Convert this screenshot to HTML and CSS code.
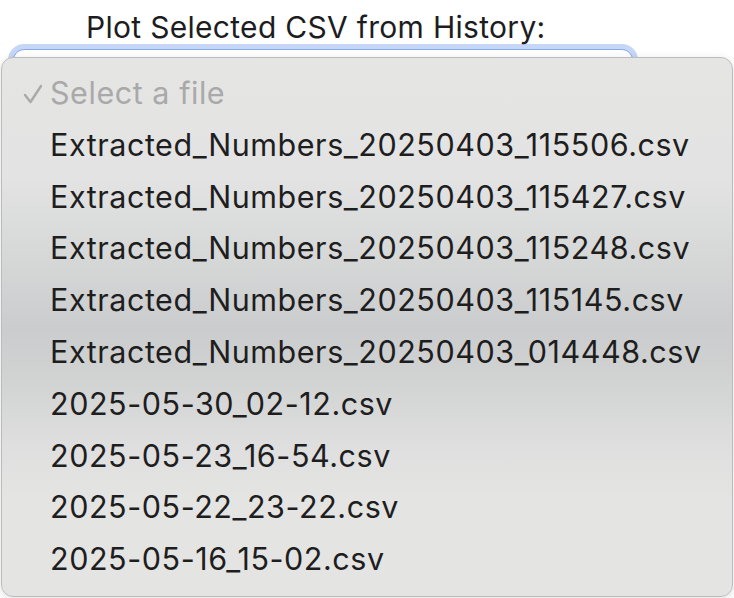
FILE: index.html
```html
<!DOCTYPE html>
<html>
<head>
<meta charset="utf-8">
<link rel="stylesheet" href="styles.css">
</head>
<body>
<div class="page">
  <div class="label">Plot Selected CSV from History:</div>
  <div class="ring"><div class="select"></div></div>
  <div class="menu">
    <div class="item placeholder"><svg class="check" width="20" height="20" viewBox="0 0 20 20"><path d="M2 11 L7.5 18 L18 2" fill="none" stroke="#a9a9a9" stroke-width="2.4" stroke-linecap="round" stroke-linejoin="round"/></svg>Select a file</div>
    <div class="item">Extracted_Numbers_20250403_115506.csv</div>
    <div class="item">Extracted_Numbers_20250403_115427.csv</div>
    <div class="item">Extracted_Numbers_20250403_115248.csv</div>
    <div class="item">Extracted_Numbers_20250403_115145.csv</div>
    <div class="item">Extracted_Numbers_20250403_014448.csv</div>
    <div class="item">2025-05-30_02-12.csv</div>
    <div class="item">2025-05-23_16-54.csv</div>
    <div class="item">2025-05-22_23-22.csv</div>
    <div class="item">2025-05-16_15-02.csv</div>
  </div>
</div>
</body>
</html>
```
FILE: styles.css
```css
html, body {
  margin: 0;
  padding: 0;
  background: #ffffff;
  width: 734px;
  height: 598px;
  overflow: hidden;
}
.page {
  position: relative;
  width: 734px;
  height: 598px;
  font-family: Inter, "Noto Sans", sans-serif;
  color: #1f1f1f;
}
.label {
  padding: 9px 0 0 86px;
  height: 35px;
  font-size: 30px;
  line-height: 36px;
  letter-spacing: 0.3px;
  color: #1d1d1f;
}
.ring {
  margin: 0 0 0 8px;
  width: 630px;
  height: 60px;
  box-sizing: border-box;
  padding: 5px;
  border-radius: 16px;
  background: #c5d6f6;
}
.select {
  height: 100%;
  box-sizing: border-box;
  border: 1.5px solid #86a9ee;
  border-radius: 11px;
  background: #ffffff;
}
.menu {
  position: absolute;
  left: 1px;
  top: 57px;
  width: 732px;
  height: 540px;
  box-sizing: border-box;
  border: 1px solid #bcbcbc;
  border-radius: 12px;
  padding-top: 9px;
  background: linear-gradient(180deg, #e5e5e4 0px, #e3e3e3 120px, #d6d7d7 200px, #cbcccd 270px, #d1d2d2 320px, #dfdfdf 390px, #e4e4e3 440px, #e4e4e3 100%);
  box-shadow: 0 2px 8px rgba(0,0,0,0.12);
  display: flex;
  flex-direction: column;
}
.item {
  position: relative;
  height: 51.8px;
  line-height: 51.8px;
  padding-left: 48px;
  font-size: 30.5px;
  letter-spacing: 0.55px;
  color: #1e1e1e;
  white-space: nowrap;
}
.placeholder {
  color: #a9a9a9;
}
.check {
  position: absolute;
  left: 21px;
  top: 17px;
}
```
